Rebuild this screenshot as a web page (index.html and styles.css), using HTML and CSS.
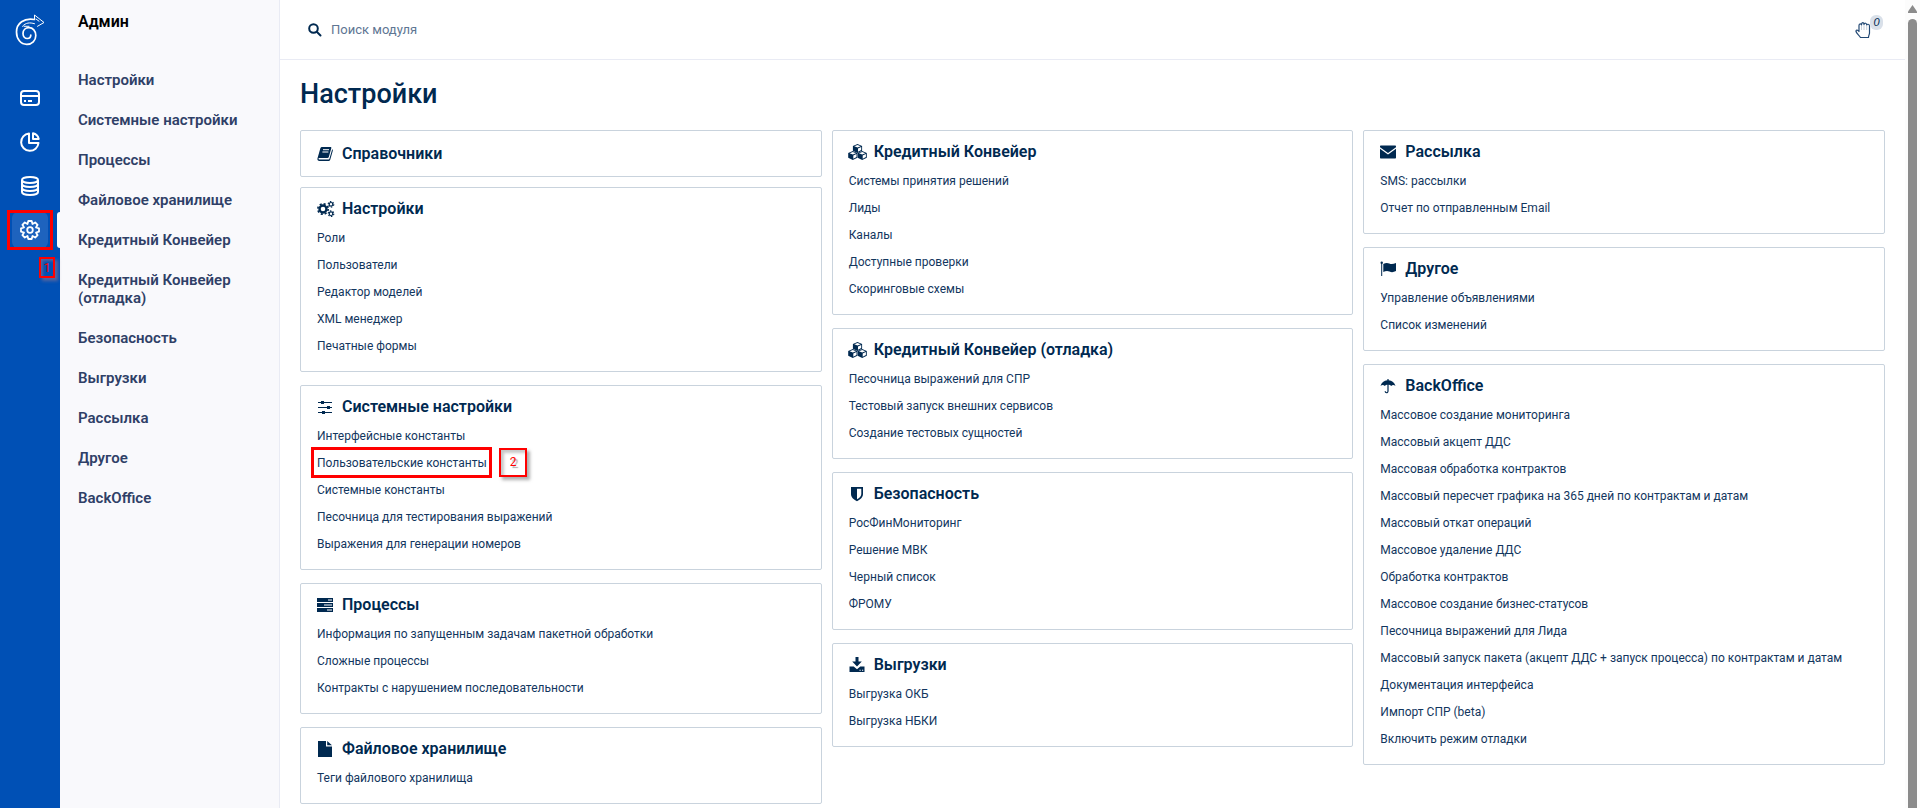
FILE: index.html
```
<!DOCTYPE html>
<html lang="ru">
<head>
    <meta charset="UTF-8">
    <title>Настройки</title>
    <link rel="stylesheet" href="styles.css">
</head>
<body>
<nav class="rail">
    <a class="logo" href="#" aria-label="Главная">
        <svg width="30" height="32" viewBox="0 0 30 32" fill="none" stroke="#fff" stroke-linecap="round" stroke-linejoin="round">
            <path stroke-width="1.700" d="M19.500 5.500C9 3.500 1.500 9.500 1.500 18c0 7 4.200 12.300 10.300 12.300 5.200 0 9-3.800 9-8.800 0-4.700-3-7.800-6.800-7.800-3.500 0-6 2.500-6 5.800 0 3 2 5 4.300 5 2 0 3.500-1.500 3.500-3.400"/>
            <path stroke-width="1" d="M19.500 5.500V1L29 8.500l-6.500 3.800M21 5l3 2.200M7.500 12.300c3.500-3.800 7-4 12-2.600M9 12.300h5"/>
        </svg>
    </a>
    <a class="rail-link" href="#" aria-label="Карты">
        <svg width="20" height="20" viewBox="0 0 20 20" fill="none" stroke="#fff" stroke-width="2">
            <rect x="1" y="3" width="18" height="14" rx="3"/><path d="M1 8h18M4 13h2M8 13h4"/>
        </svg>
    </a>
    <a class="rail-link" href="#" aria-label="Отчеты">
        <svg width="20" height="20" viewBox="0 0 20 20" fill="none" stroke="#fff" stroke-width="2" stroke-linejoin="round">
            <path d="M9 1.500A8.700 8.700 0 1 0 18.500 11H9z"/><path d="M13 1.300A7.500 7.500 0 0 1 18.700 7H13z"/>
        </svg>
    </a>
    <a class="rail-link" href="#" aria-label="Данные">
        <svg width="20" height="20" viewBox="0 0 20 20" fill="none" stroke="#fff" stroke-width="2">
            <ellipse cx="10" cy="4" rx="8" ry="3"/><path d="M2 4v12c0 1.700 3.500 3 8 3s8-1.300 8-3V4M2 8c0 1.700 3.500 3 8 3s8-1.300 8-3M2 12c0 1.700 3.500 3 8 3s8-1.300 8-3"/>
        </svg>
    </a>
    <a class="rail-link active" href="#" aria-label="Админ">
        <svg width="20" height="20" viewBox="0 0 20 20" fill="none" stroke="#fff" stroke-width="1.800" stroke-linejoin="round">
            <path d="M19 8.300V11.700L16 12.500L17.600 15.200L15.200 17.600L12.500 16L11.700 19H8.300L7.500 16L4.800 17.600L2.400 15.200L4 12.500L1 11.700V8.300L4 7.500L2.400 4.800L4.800 2.400L7.500 4L8.300 1H11.700L12.500 4L15.200 2.400L17.600 4.800L16 7.500Z"/>
            <circle cx="10" cy="10" r="2.800"/>
        </svg>
        <span class="frame frame-rail"></span>
        <span class="step step-rail">1</span>
    </a>
</nav>
<aside class="sidebar">
    <h2>Админ</h2>
    <ul>
        <li><a href="#c2">Настройки</a></li>
        <li><a href="#c3">Системные настройки</a></li>
        <li><a href="#c4">Процессы</a></li>
        <li><a href="#c5">Файловое хранилище</a></li>
        <li><a href="#c6">Кредитный Конвейер</a></li>
        <li><a href="#c7">Кредитный Конвейер (отладка)</a></li>
        <li><a href="#c8">Безопасность</a></li>
        <li><a href="#c9">Выгрузки</a></li>
        <li><a href="#c10">Рассылка</a></li>
        <li><a href="#c11">Другое</a></li>
        <li><a href="#c12">BackOffice</a></li>
    </ul>
</aside>
<div class="page">
    <header class="topbar">
        <label class="search">
            <svg width="14" height="14" viewBox="0 0 14 14" fill="none" stroke="#002950" stroke-width="2" stroke-linecap="round"><circle cx="5.500" cy="5.500" r="4.300"/><path d="M9 9l3.500 3.500"/></svg>
            <input type="text" placeholder="Поиск модуля" aria-label="Поиск модуля">
        </label>
        <button class="hand" type="button" aria-label="Задачи">
            <svg width="16" height="18" viewBox="0 0 16 18" fill="none" stroke="#244a75" stroke-width="1.200" stroke-linejoin="round">
                <path d="M4 10.500V4.500c0-2 2.300-2 2.500-.5 0-3 2.500-3 2.500-.5.300-2 2.700-1.500 2.700.5 0-1 2.800-1.300 2.800 1v7c0 1.500-1 2.500-1 4.500H5.500C4.500 14.500 1.500 12.500 1 10.500c-.3-1.500 1.500-2.300 3 0z"/>
                <path stroke="#9fb0c4" stroke-width=".6" d="M6.500 4.500V9M9 4V9M11.700 4.500V9"/>
            </svg>
            <i class="badge">0</i>
        </button>
    </header>
    <main>
        <h1>Настройки</h1>
        <div class="columns">
            <div class="column">
                <section class="card card-single" id="c1">
                    <h3><svg viewBox="0 0 16 16"><path d="M5 1h8.500c.7 0 1 .5.800 1.200L11.800 11c-.2.700-.7 1-1.300 1H2.200c-1 0-1 1.600 0 1.600h9c.8 0 1.100-.3 1.300-1L15.200 3.200c.6.300.8.800.6 1.500L13.300 13.500c-.2.900-.8 1.500-1.800 1.500H2.500C1 15 0 13.800.5 12.300L3.300 2.500C3.600 1.500 4.200 1 5 1z"/><path d="M6 3.700h6M5.400 6h6" stroke="#fff"/></svg>Справочники</h3>
                </section>
                <section class="card" id="c2">
                    <h3><svg class="wide" viewBox="0 0 18 16" fill="none" stroke="#002950"><circle cx="6.500" cy="8" r="3.500" stroke-width="2.400"/><circle cx="6.500" cy="8" r="5.200" stroke-width="1.600" stroke-dasharray="2.100 1.984"/><circle cx="14.500" cy="3.300" r="1.800" stroke-width="1.200"/><circle cx="14.500" cy="3.300" r="2.800" stroke-width="1.100" stroke-dasharray="1.500 1.432"/><circle cx="14.500" cy="12.700" r="1.800" stroke-width="1.200"/><circle cx="14.500" cy="12.700" r="2.800" stroke-width="1.100" stroke-dasharray="1.500 1.432"/></svg>Настройки</h3>
                    <ul>
                        <li><a href="#">Роли</a></li>
                        <li><a href="#">Пользователи</a></li>
                        <li><a href="#">Редактор моделей</a></li>
                        <li><a href="#">XML менеджер</a></li>
                        <li><a href="#">Печатные формы</a></li>
                    </ul>
                </section>
                <section class="card" id="c3">
                    <h3><svg viewBox="0 0 16 16"><path d="M1 3h14v1H1zM1 8h14v1H1zM1 13h14v1H1z"/><path d="M4 2h3v3H4zM10 7h3v3h-3zM5 12h3v3H5z"/></svg>Системные настройки</h3>
                    <ul>
                        <li><a href="#">Интерфейсные константы</a></li>
                        <li class="marked"><a href="#">Пользовательские константы</a><span class="frame frame-link"></span><span class="step step-link">2</span></li>
                        <li><a href="#">Системные константы</a></li>
                        <li><a href="#">Песочница для тестирования выражений</a></li>
                        <li><a href="#">Выражения для генерации номеров</a></li>
                    </ul>
                </section>
                <section class="card" id="c4">
                    <h3><svg viewBox="0 0 16 16"><path d="M0 1h16v4H0zM0 6h16v4H0zM0 11h16v4H0z"/><path d="M11 3h4M7 8h8M10 13h5" stroke="#fff"/></svg>Процессы</h3>
                    <ul>
                        <li><a href="#">Информация по запущенным задачам пакетной обработки</a></li>
                        <li><a href="#">Сложные процессы</a></li>
                        <li><a href="#">Контракты с нарушением последовательности</a></li>
                    </ul>
                </section>
                <section class="card" id="c5">
                    <h3><svg viewBox="0 0 16 16"><path d="M1 0h8v5.500h6V16H1zM10.200 0L15 4.300h-4.800z"/></svg>Файловое хранилище</h3>
                    <ul>
                        <li><a href="#">Теги файлового хранилища</a></li>
                    </ul>
                </section>
            </div>
            <div class="column">
                <section class="card" id="c6">
                    <h3><svg class="wide" viewBox="0 0 19 16"><g id="cubes"><path id="cube" d="M9.500 0l4.600 1.900v4.800L9.500 9 4.900 6.700V1.900zm0 .9L6.300 2.200l3.200 1.400 3.200-1.400zm.5 3.600v3.200l3.200-1.600V3.100z" fill-rule="evenodd"/><use href="#cube" x="-4.700" y="7"/><use href="#cube" x="4.700" y="7"/></g></svg>Кредитный Конвейер</h3>
                    <ul>
                        <li><a href="#">Системы принятия решений</a></li>
                        <li><a href="#">Лиды</a></li>
                        <li><a href="#">Каналы</a></li>
                        <li><a href="#">Доступные проверки</a></li>
                        <li><a href="#">Скоринговые схемы</a></li>
                    </ul>
                </section>
                <section class="card" id="c7">
                    <h3><svg class="wide" viewBox="0 0 19 16"><use href="#cubes"/></svg>Кредитный Конвейер (отладка)</h3>
                    <ul>
                        <li><a href="#">Песочница выражений для СПР</a></li>
                        <li><a href="#">Тестовый запуск внешних сервисов</a></li>
                        <li><a href="#">Создание тестовых сущностей</a></li>
                    </ul>
                </section>
                <section class="card" id="c8">
                    <h3><svg viewBox="0 0 16 16"><path fill-rule="evenodd" d="M2 1h12v7c0 3.300-2.500 5.500-6 7.200C4.500 13.500 2 11.300 2 8zm6 1.700v10.500c2.500-1.300 4.300-3 4.300-5.200V2.700z"/></svg>Безопасность</h3>
                    <ul>
                        <li><a href="#">РосФинМониторинг</a></li>
                        <li><a href="#">Решение МВК</a></li>
                        <li><a href="#">Черный список</a></li>
                        <li><a href="#">ФРОМУ</a></li>
                    </ul>
                </section>
                <section class="card" id="c9">
                    <h3><svg viewBox="0 0 16 16"><path d="M6.500 0h3v4.500h3.300L8 9.500l-4.800-5h3.300z"/><path fill-rule="evenodd" d="M.5 9.500h4.200L8 12.200l3.300-2.700h4.200V15H.5zm10 3.200v1h1.200v-1zm2.500 0v1h1.200v-1z"/></svg>Выгрузки</h3>
                    <ul>
                        <li><a href="#">Выгрузка ОКБ</a></li>
                        <li><a href="#">Выгрузка НБКИ</a></li>
                    </ul>
                </section>
            </div>
            <div class="column">
                <section class="card" id="c10">
                    <h3><svg viewBox="0 0 16 16"><path d="M1 1.500h14c.6 0 1 .4 1 1v.8L8 9 0 3.300v-.8c0-.6.400-1 1-1zM0 4.800l8 5.700 8-5.700v8.700c0 .6-.4 1-1 1H1c-.6 0-1-.4-1-1z"/></svg>Рассылка</h3>
                    <ul>
                        <li><a href="#">SMS: рассылки</a></li>
                        <li><a href="#">Отчет по отправленным Email</a></li>
                    </ul>
                </section>
                <section class="card" id="c11">
                    <h3><svg viewBox="0 0 16 16"><circle cx="1.700" cy="1.800" r="1.200"/><path d="M1.200 2h1v13h-1zM3.300 3c2-1.200 4-1.500 6-.5s4 .6 6.700-.5v8c-2.500 1.300-4.500 1.500-6.500.5s-4-.7-6.200.5z"/></svg>Другое</h3>
                    <ul>
                        <li><a href="#">Управление объявлениями</a></li>
                        <li><a href="#">Список изменений</a></li>
                    </ul>
                </section>
                <section class="card" id="c12">
                    <h3><svg viewBox="0 0 16 16"><path d="M7.400 1h1.200v1.200C12 2.500 14.700 4.500 15.500 8 14 6.700 12.300 6.700 11.200 8 10.300 7 9.500 6.700 8.600 6.800V13c0 3-4 3-4 .3h1.200c0 1.200 1.600 1.200 1.600-.3V6.800C6.500 6.700 5.700 7 4.800 8 3.700 6.700 2 6.700.5 8c.8-3.500 3.500-5.500 6.900-5.800z"/></svg>BackOffice</h3>
                    <ul>
                        <li><a href="#">Массовое создание мониторинга</a></li>
                        <li><a href="#">Массовый акцепт ДДС</a></li>
                        <li><a href="#">Массовая обработка контрактов</a></li>
                        <li><a href="#">Массовый пересчет графика на 365 дней по контрактам и датам</a></li>
                        <li><a href="#">Массовый откат операций</a></li>
                        <li><a href="#">Массовое удаление ДДС</a></li>
                        <li><a href="#">Обработка контрактов</a></li>
                        <li><a href="#">Массовое создание бизнес-статусов</a></li>
                        <li><a href="#">Песочница выражений для Лида</a></li>
                        <li><a href="#">Массовый запуск пакета (акцепт ДДС + запуск процесса) по контрактам и датам</a></li>
                        <li><a href="#">Документация интерфейса</a></li>
                        <li><a href="#">Импорт СПР (beta)</a></li>
                        <li><a href="#">Включить режим отладки</a></li>
                    </ul>
                </section>
            </div>
        </div>
    </main>
</div>
<div class="scroll">
    <svg width="9" height="8" viewBox="0 0 9 8" fill="#8b8b8b"><path d="M4.500 0L9 6.500V8H0V6.500z"/></svg>
    <div class="thumb"></div>
</div>
</body>
</html>
```
FILE: styles.css
```
*{
    box-sizing: border-box;
}
body{
    display: flex;
    margin: 0;
    min-height: 100vh;
    background-color: #ffffff;
    color: #002950;
    font-family: Roboto, "Liberation Sans", sans-serif;
    font-size: 12px;
}
ul{
    list-style: none;
    margin: 0;
    padding: 0;
}
a{
    color: inherit;
    text-decoration: none;
}
h1, h2, h3{
    margin: 0;
    font-weight: 600;
}
.rail{
    display: flex;
    flex-direction: column;
    align-items: center;
    gap: 8px;
    flex: 0 0 60px;
    background-color: #0050b5;
}
.logo{
    height: 72px;
    padding-top: 14px;
}
.rail-link{
    position: relative;
    display: flex;
    align-items: center;
    justify-content: center;
    width: 36px;
    height: 36px;
    border-radius: 6px;
}
.active{
    background-color: #1e63be;
}
.active::after{
    content: "";
    position: absolute;
    top: 0;
    right: -12px;
    width: 3px;
    height: 36px;
    background-color: #ffffff;
    border-radius: 3px 0 0 3px;
}
/* красные рамки и номера шагов */
.frame{
    position: absolute;
    border: 3px solid #ff0000;
}
.frame-rail{
    top: -2px;
    left: -5px;
    width: 46px;
    height: 40px;
}
.frame-link{
    top: -3px;
    left: -6px;
    width: 181px;
    height: 31px;
}
.step{
    position: absolute;
    display: flex;
    align-items: center;
    justify-content: center;
    border: 2px solid #ff0000;
    color: #ff0000;
}
.step-rail{
    top: 45px;
    left: 27px;
    width: 16px;
    height: 21px;
    box-shadow: 3px 3px 3px rgba(120, 110, 150, 0.7), inset 2px 2px 3px rgba(120, 110, 150, 0.7);
}
.step-link{
    top: -2px;
    left: 182px;
    width: 28px;
    height: 29px;
    box-shadow: 3px 3px 3px rgba(120, 120, 120, 0.6), inset 3px 3px 3px rgba(120, 120, 120, 0.4);
    text-shadow: 2px 2px 1px #aaaaaa;
}
.sidebar{
    flex: 0 0 220px;
    padding: 0 18px;
    background-color: #f9f9fc;
    border-right: 1px solid #e9ebf4;
    color: #2f4067;
    font-size: 15px;
    font-weight: 600;
    line-height: 18px;
}
.sidebar h2{
    height: 60px;
    padding-top: 13px;
    color: #000000;
    font-size: 16px;
}
.sidebar a{
    display: block;
    padding: 11px 0;
}
.page{
    flex: 1;
    min-width: 0;
}
.topbar{
    display: flex;
    justify-content: space-between;
    align-items: center;
    height: 60px;
    padding: 0 22px 0 28px;
    border-bottom: 1px solid #e9ebf4;
}
.search{
    display: flex;
    align-items: center;
    gap: 9px;
}
.search input{
    width: 300px;
    border: none;
    outline: none;
    padding: 0;
    background: none;
    font-family: inherit;
    font-size: 13px;
}
.search input::placeholder{
    color: #5e7693;
}
.hand{
    position: relative;
    display: flex;
    width: 28px;
    height: 18px;
    padding: 0;
    border: none;
    background: none;
}
.badge{
    position: absolute;
    top: -6px;
    left: 15px;
    width: 13px;
    height: 15px;
    border-radius: 6px;
    background-color: #d9e0e9;
    color: #002950;
    font-size: 11px;
    line-height: 15px;
    text-align: center;
}
main{
    padding: 17px 20px 4px;
}
h1{
    height: 53px;
    font-size: 27px;
    font-weight: 500;
    line-height: 34px;
}
.columns{
    display: grid;
    grid-template-columns: repeat(3, 1fr);
    gap: 10px;
    align-items: start;
}
.column{
    display: flex;
    flex-direction: column;
    gap: 13px;
}
.card{
    padding: 11px 16px;
    border: 1px solid #c9d3dd;
    border-radius: 2px;
}
.card-single{
    margin-bottom: -3px;
    padding: 13px 16px 12px;
}
.card h3{
    display: flex;
    align-items: center;
    gap: 9px;
    font-size: 16px;
    line-height: 20px;
}
.card h3 svg{
    width: 16px;
    height: 16px;
}
.card h3 .wide{
    width: 19px;
    margin: 0 -2px 0 -1px;
}
.card svg:not([fill]){
    fill: #002950;
}
.card ul{
    margin-top: 6px;
    color: #12365e;
}
.card li{
    line-height: 27px;
}
.marked{
    position: relative;
}
.scroll{
    display: flex;
    flex-direction: column;
    align-items: center;
    gap: 6px;
    flex: 0 0 15px;
    padding-top: 5px;
    background-color: #fcfcfc;
}
.thumb{
    flex: 1;
    width: 9px;
    background-color: #8b8b8b;
    border-radius: 5px 5px 0 0;
}
```
